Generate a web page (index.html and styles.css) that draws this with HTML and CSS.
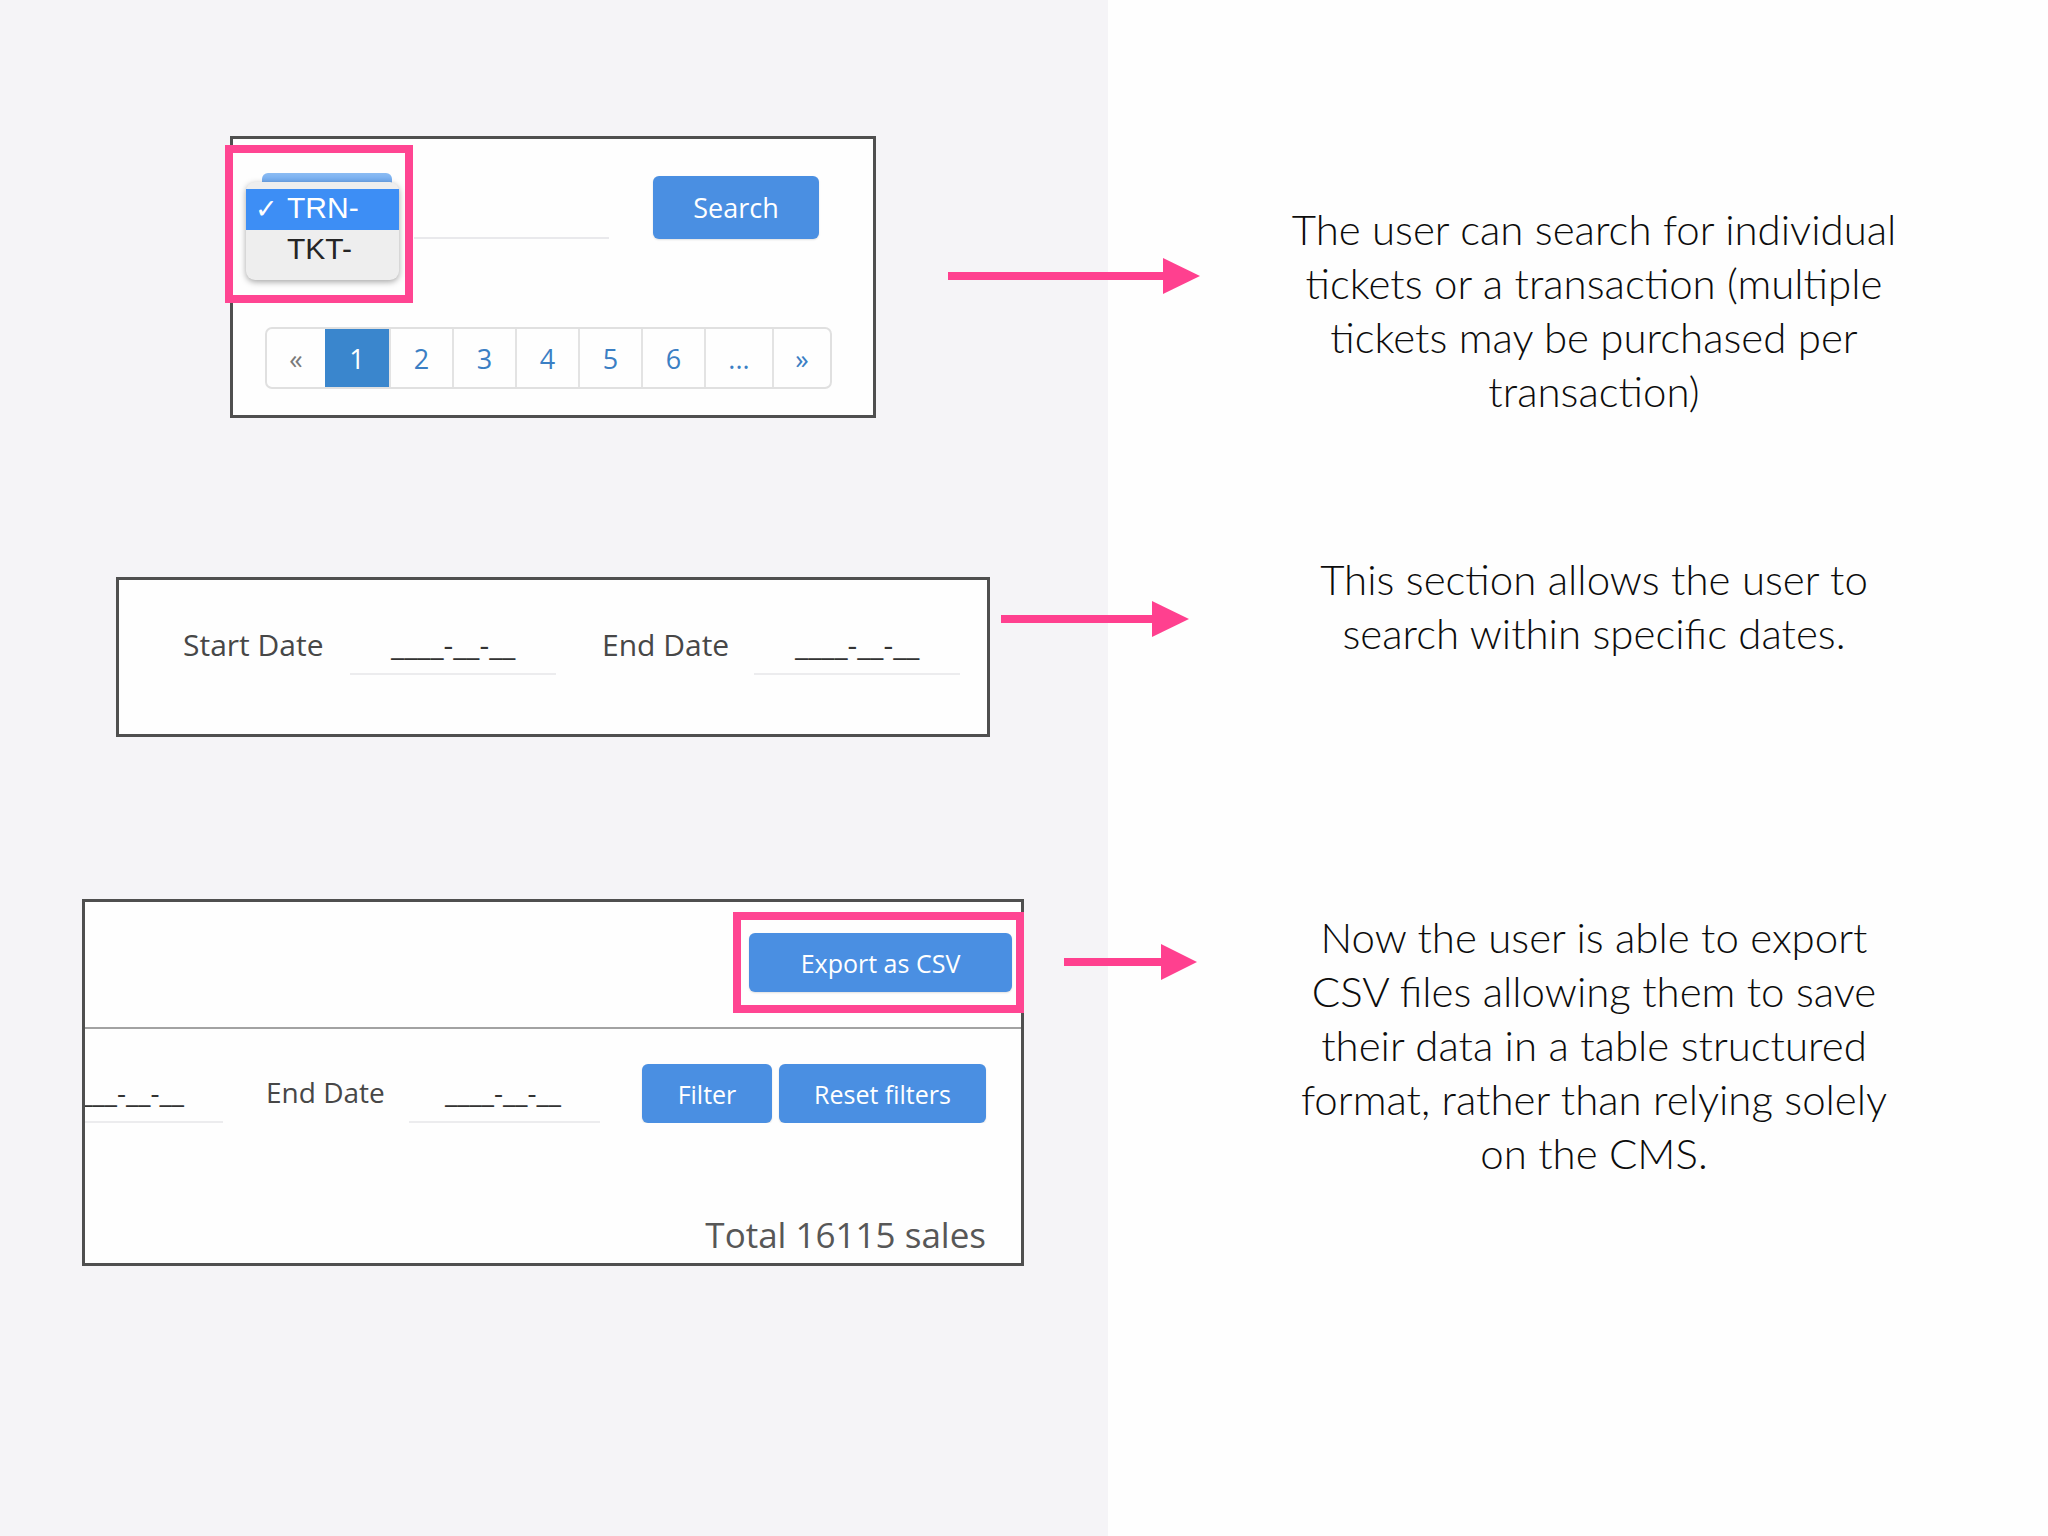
FILE: index.html
```html
<!DOCTYPE html>
<html lang="en">
<head>
<meta charset="utf-8">
<title>Sales search features</title>
<link rel="stylesheet" href="styles.css">
</head>
<body>
<div class="page">

  <section class="row row-1">
    <div class="demo demo-1">
      <div class="card card-search">
        <div class="callout callout-select">
          <div class="select-menu">
            <div class="menu-panel">
              <div class="option is-selected"><span class="check">✓</span>TRN-</div>
              <div class="option">TKT-</div>
            </div>
          </div>
        </div>
        <div class="search-bar">
          <div class="search-input"></div>
          <button class="btn btn-search">Search</button>
        </div>
        <nav class="pagination">
          <span class="page-item page-prev">«</span>
          <span class="page-item page-num is-active">1</span>
          <span class="page-item page-num">2</span>
          <span class="page-item page-num">3</span>
          <span class="page-item page-num">4</span>
          <span class="page-item page-num">5</span>
          <span class="page-item page-num">6</span>
          <span class="page-item page-gap">...</span>
          <span class="page-item page-next">»</span>
        </nav>
      </div>
      <svg class="arrow arrow-1" width="252" height="36" viewBox="0 0 252 36">
        <rect x="0" y="14" width="220" height="8" fill="#ff408f"/>
        <polygon points="215,0 252,18 215,36" fill="#ff408f"/>
      </svg>
    </div>
    <p class="note note-1">The user can search for individual<br>tickets or a transaction (multiple<br>tickets may be purchased per<br>transaction)</p>
  </section>

  <section class="row row-2">
    <div class="demo demo-2">
      <div class="card card-dates">
        <div class="date-filters">
          <span class="date-label label-start">Start Date</span>
          <span class="date-input">____-__-__</span>
          <span class="date-label label-end">End Date</span>
          <span class="date-input">____-__-__</span>
        </div>
      </div>
      <svg class="arrow arrow-2" width="188" height="36" viewBox="0 0 188 36">
        <rect x="0" y="14" width="156" height="8" fill="#ff408f"/>
        <polygon points="151,0 188,18 151,36" fill="#ff408f"/>
      </svg>
    </div>
    <p class="note note-2">This section allows the user to<br>search within specific dates.</p>
  </section>

  <section class="row row-3">
    <div class="demo demo-3">
      <div class="card card-export">
        <div class="export-bar">
          <button class="btn btn-export">Export as CSV</button>
        </div>
        <div class="filter-bar">
          <span class="date-input date-input-clipped">____-__-__</span>
          <span class="date-label">End Date</span>
          <span class="date-input">____-__-__</span>
          <button class="btn btn-filter">Filter</button>
          <button class="btn btn-reset">Reset filters</button>
        </div>
        <p class="total">Total 16115 sales</p>
        <div class="callout callout-export"></div>
      </div>
      <svg class="arrow arrow-3" width="133" height="36" viewBox="0 0 133 36">
        <rect x="0" y="14" width="102" height="8" fill="#ff408f"/>
        <polygon points="97,0 133,18 97,36" fill="#ff408f"/>
      </svg>
    </div>
    <p class="note note-3">Now the user is able to export<br>CSV files allowing them to save<br>their data in a table structured<br>format, rather than relying solely<br>on the CMS.</p>
  </section>

</div>
</body>
</html>
```

FILE: styles.css
```css
* {
  box-sizing: border-box;
  margin: 0;
  padding: 0;
}

html,
body {
  width: 2048px;
  height: 1536px;
}

body {
  background: #fefefe;
  font-family: "Open Sans", "Liberation Sans", sans-serif;
  overflow: hidden;
}

.page {
  width: 2048px;
  height: 1536px;
  padding-top: 136px;
  background: linear-gradient(to right, #f5f4f7 0, #f5f4f7 1108px, #fefefe 1108px);
}

/* ---------- rows ---------- */
.row {
  display: grid;
  grid-template-columns: 1240px 708px;
}

.row-1 {
  height: 282px;
}

.row-2 {
  margin-top: 135px;
  height: 184px;
}

.row-3 {
  margin-top: 162px;
}

.demo {
  display: flex;
  align-items: flex-start;
}

.demo-1 {
  padding-left: 230px;
}

.demo-2 {
  padding-left: 116px;
}

.demo-3 {
  padding-left: 82px;
}

.arrow {
  display: block;
  flex: none;
}

.arrow-1 {
  margin: 122px 0 0 72px;
}

.arrow-2 {
  margin: 48px 0 0 11px;
}

.arrow-3 {
  margin: 45px 0 0 40px;
}

.note {
  font-family: "Lato", "Open Sans", sans-serif;
  font-weight: 300;
  font-size: 42px;
  line-height: 54px;
  text-align: center;
  color: #0c0c0c;
}

.note-1 {
  margin-top: 66px;
}

.note-2 {
  margin-top: -1px;
}

.note-3 {
  margin-top: 11px;
}

/* ---------- cards ---------- */
.card {
  position: relative;
  flex: none;
  background: #fefefe;
  border: 3px solid #4f4f4f;
}

.callout {
  position: absolute;
  border: 8px solid #ff4592;
}

.btn {
  display: flex;
  align-items: center;
  justify-content: center;
  flex: none;
  border: none;
  border-radius: 6px;
  background: #4a8fe2;
  color: #ffffff;
  font-family: "Open Sans", sans-serif;
  font-size: 25px;
  box-shadow: 0 1px 2px rgba(0, 0, 0, 0.12);
}

/* ---------- card 1: search ---------- */
.card-search {
  width: 646px;
  height: 282px;
  padding-top: 37px;
}

.callout-select {
  left: -8px;
  top: 6px;
  width: 188px;
  height: 158px;
  padding: 20px 0 0 13px;
  z-index: 2;
}

.select-menu {
  position: relative;
  width: 153px;
  padding-top: 9px;
}

.select-menu::before {
  content: "";
  position: absolute;
  left: 16px;
  right: 7px;
  top: 0;
  height: 20px;
  border-radius: 6px 6px 0 0;
  background: linear-gradient(#8cbcf3, #4d94ec);
}

.menu-panel {
  position: relative;
  height: 98px;
  padding-top: 7px;
  border-radius: 9px;
  background: #eeeeee;
  box-shadow: 0 2px 6px rgba(0, 0, 0, 0.35);
}

.option {
  position: relative;
  height: 41px;
  padding-left: 41px;
  font-family: "Liberation Sans", "Noto Sans", sans-serif;
  font-size: 30px;
  line-height: 38px;
  color: #252525;
}

.option.is-selected {
  background: #3d8ef5;
  color: #ffffff;
}

.check {
  position: absolute;
  left: 9px;
  top: 0;
  font-family: "DejaVu Sans", sans-serif;
  font-size: 27px;
  line-height: 40px;
}

.search-bar {
  display: flex;
  align-items: flex-end;
  height: 63px;
  padding-left: 181px;
}

.search-input {
  width: 195px;
  height: 40px;
  border-bottom: 2px solid #e9e9ec;
}

.btn-search {
  width: 166px;
  height: 63px;
  margin-left: 44px;
  font-size: 27px;
}

.pagination {
  display: flex;
  width: 567px;
  height: 62px;
  margin: 88px 0 0 32px;
  border: 2px solid #e0e0e0;
  border-radius: 7px;
  overflow: hidden;
}

.page-item {
  display: flex;
  align-items: center;
  justify-content: center;
  width: 63px;
  border-left: 2px solid #e3e3e3;
  font-size: 27px;
  color: #3b7fc4;
}

.page-prev {
  width: 58px;
  border-left: none;
  color: #7a7a7a;
}

.page-next {
  width: 58px;
}

.page-num.is-active {
  width: 64px;
  border-left: none;
  background: #3a86cd;
  color: #ffffff;
}

.page-gap {
  width: 68px;
}

/* ---------- card 2: dates ---------- */
.card-dates {
  width: 874px;
  height: 160px;
  margin-top: 24px;
  padding: 37px 0 0 64px;
}

.date-filters {
  display: flex;
  height: 58px;
}

.date-label {
  flex: none;
  font-size: 30px;
  line-height: 56px;
  color: #474747;
}

.label-start {
  width: 167px;
}

.label-end {
  width: 198px;
  padding-left: 46px;
}

.date-input {
  flex: none;
  width: 206px;
  padding-left: 41px;
  border-bottom: 2px solid #ececee;
  font-size: 30px;
  line-height: 56px;
  color: #333333;
}

/* ---------- card 3: export ---------- */
.card-export {
  width: 942px;
  height: 367px;
}

.export-bar {
  display: flex;
  justify-content: flex-end;
  height: 127px;
  padding: 31px 9px 0 0;
  border-bottom: 2px solid #a2a2a2;
}

.btn-export {
  width: 263px;
  height: 59px;
}

.filter-bar {
  display: flex;
  height: 94px;
  padding-top: 35px;
  overflow: hidden;
}

.filter-bar .date-label {
  width: 186px;
  padding-left: 43px;
  font-size: 28px;
  line-height: 57px;
}

.filter-bar .date-input {
  width: 191px;
  padding-left: 36px;
  font-size: 28px;
  line-height: 57px;
}

.filter-bar .date-input-clipped {
  margin-left: -53px;
}

.btn-filter {
  width: 130px;
  height: 59px;
  margin-left: 42px;
}

.btn-reset {
  width: 207px;
  height: 59px;
  margin-left: 7px;
}

.total {
  margin-top: 90px;
  padding-right: 35px;
  text-align: right;
  font-size: 35px;
  line-height: 44px;
  color: #575757;
}

.callout-export {
  left: 648px;
  top: 10px;
  width: 291px;
  height: 101px;
}
```
